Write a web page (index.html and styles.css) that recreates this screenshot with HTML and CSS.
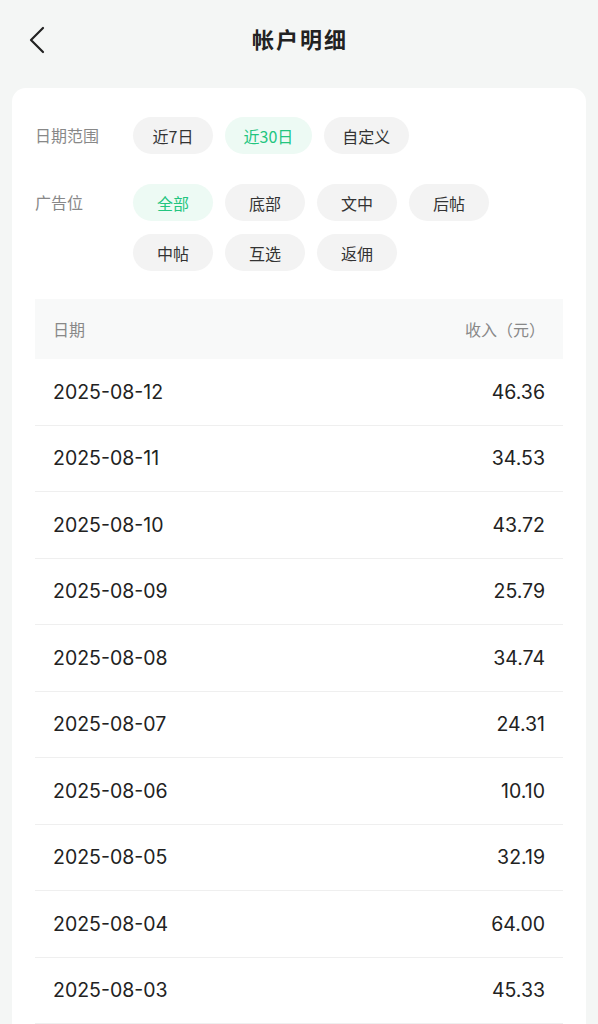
FILE: index.html
```html
<!DOCTYPE html>
<html lang="zh">
<head>
<meta charset="utf-8">
<link rel="stylesheet" href="styles.css">
</head>
<body>
<header class="nav">
  <svg class="back" width="16" height="28" viewBox="0 0 16 28"><path d="M14 2 L2 14 L14 26" fill="none" stroke="#222" stroke-width="2.2" stroke-linecap="round" stroke-linejoin="round"/></svg>
  <h1 class="title">帐户明细</h1>
</header>
<main class="card">
  <div class="filter">
    <div class="label">日期范围</div>
    <div class="chips">
      <span class="chip">近7日</span>
      <span class="chip active">近30日</span>
      <span class="chip">自定义</span>
    </div>
  </div>
  <div class="filter">
    <div class="label">广告位</div>
    <div class="chips">
      <span class="chip active">全部</span>
      <span class="chip">底部</span>
      <span class="chip">文中</span>
      <span class="chip">后帖</span>
      <span class="chip">中帖</span>
      <span class="chip">互选</span>
      <span class="chip">返佣</span>
    </div>
  </div>
  <div class="table">
    <div class="thead"><span>日期</span><span>收入（元）</span></div>
    <div class="row"><span>2025-08-12</span><span>46.36</span></div>
    <div class="row"><span>2025-08-11</span><span>34.53</span></div>
    <div class="row"><span>2025-08-10</span><span>43.72</span></div>
    <div class="row"><span>2025-08-09</span><span>25.79</span></div>
    <div class="row"><span>2025-08-08</span><span>34.74</span></div>
    <div class="row"><span>2025-08-07</span><span>24.31</span></div>
    <div class="row"><span>2025-08-06</span><span>10.10</span></div>
    <div class="row"><span>2025-08-05</span><span>32.19</span></div>
    <div class="row"><span>2025-08-04</span><span>64.00</span></div>
    <div class="row"><span>2025-08-03</span><span>45.33</span></div>
  </div>
</main>
</body>
</html>
```
FILE: styles.css
```css
* { box-sizing: border-box; }
html, body { margin: 0; padding: 0; }
body {
  background: #f4f6f5;
  font-family: Inter, "Noto Sans CJK SC", sans-serif;
  color: #222;
  height: 1024px;
  overflow: hidden;
}
.nav {
  height: 88px;
  position: relative;
  display: flex;
  align-items: center;
  justify-content: center;
  padding-bottom: 12px;
}
.back {
  position: absolute;
  left: 29px;
  top: 26px;
}
.title {
  margin: 0;
  font-size: 22px;
  font-weight: 700;
  color: #222;
  font-family: "Noto Sans CJK SC", sans-serif;
  letter-spacing: 2px;
  padding-left: 2px;
}
.card {
  margin: 0 12px;
  background: #fff;
  border-radius: 14px 14px 0 0;
  padding: 29px 23px 0;
  min-height: 936px;
}
.filter {
  display: flex;
  align-items: flex-start;
  margin-bottom: 30px;
}
.filter + .filter { margin-bottom: 29px; }
.label {
  width: 98px;
  flex: none;
  font-family: "Noto Sans CJK SC", sans-serif;
  font-size: 16px;
  color: #888;
  line-height: 37px;
}
.chips {
  display: flex;
  flex-wrap: wrap;
  gap: 13px 12px;
}
.chip {
  min-width: 80px;
  height: 37px;
  padding: 0 18.5px;
  border-radius: 19px;
  background: #f3f3f3;
  color: #333;
  font-family: "Noto Sans CJK SC", sans-serif;
  font-size: 16px;
  display: inline-flex;
  align-items: center;
  justify-content: center;
}
.chip.active {
  background: #edfaf4;
  color: #22c57f;
}
.table {
  font-family: Inter, "Noto Sans CJK SC", sans-serif;
}
.thead {
  height: 60px;
  margin-top: -1px;
  background: #f8f9f9;
  display: flex;
  align-items: center;
  justify-content: space-between;
  padding: 0 18px;
  font-family: "Noto Sans CJK SC", sans-serif;
  font-size: 16px;
  color: #888;
}
.row {
  height: 66.5px;
  display: flex;
  align-items: center;
  justify-content: space-between;
  padding: 0 18px;
  border-bottom: 1px solid #efefef;
  font-size: 19.5px;
  color: #222;
}
```
